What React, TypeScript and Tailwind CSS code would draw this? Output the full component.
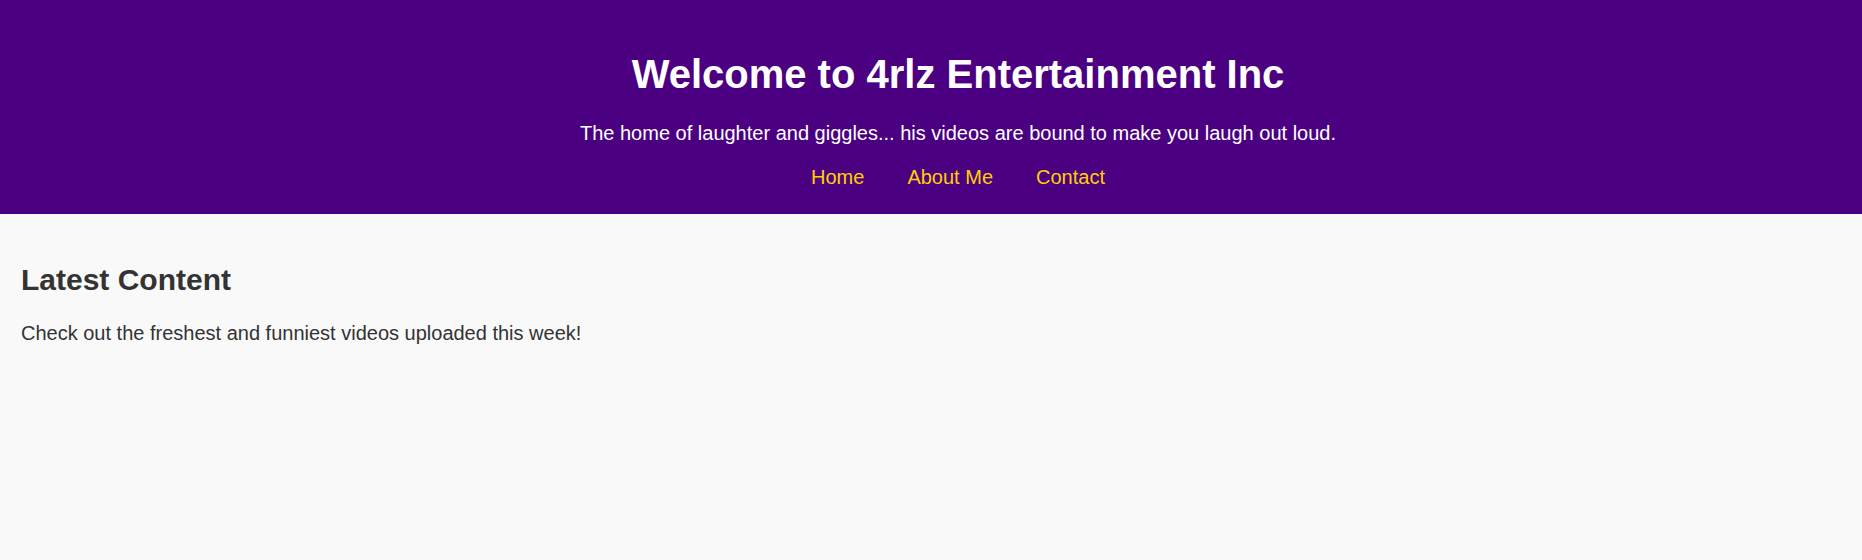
export default function App() {
  const links = ["Home", "About Me", "Contact"];

  return (
    <div className="min-h-[560px] bg-[#f9f9f9] font-['Liberation_Sans',Arial,sans-serif] text-[#333333]">
      <header className="bg-[#4b0082] pl-[54px] pt-[51px] pb-[25px] text-center text-white">
        <h1 className="text-[40px] font-bold leading-[46px]">
          Welcome to 4rlz Entertainment Inc
        </h1>
        <p className="mt-[25px] text-[20px] leading-[23px]">
          The home of laughter and giggles... his videos are bound to make you laugh out loud.
        </p>
        <nav className="mt-[21px] flex justify-center gap-[43px] text-[20px] leading-[23px]">
          {links.map((label) => (
            <a key={label} href="#" className="text-[#ffd000]">
              {label}
            </a>
          ))}
        </nav>
      </header>

      <main className="px-[21px] pt-[49px]">
        <h2 className="text-[30px] font-bold leading-[34px]">Latest Content</h2>
        <p className="mt-[25px] text-[20px] leading-[23px]">
          Check out the freshest and funniest videos uploaded this week!
        </p>
      </main>
    </div>
  );
}
